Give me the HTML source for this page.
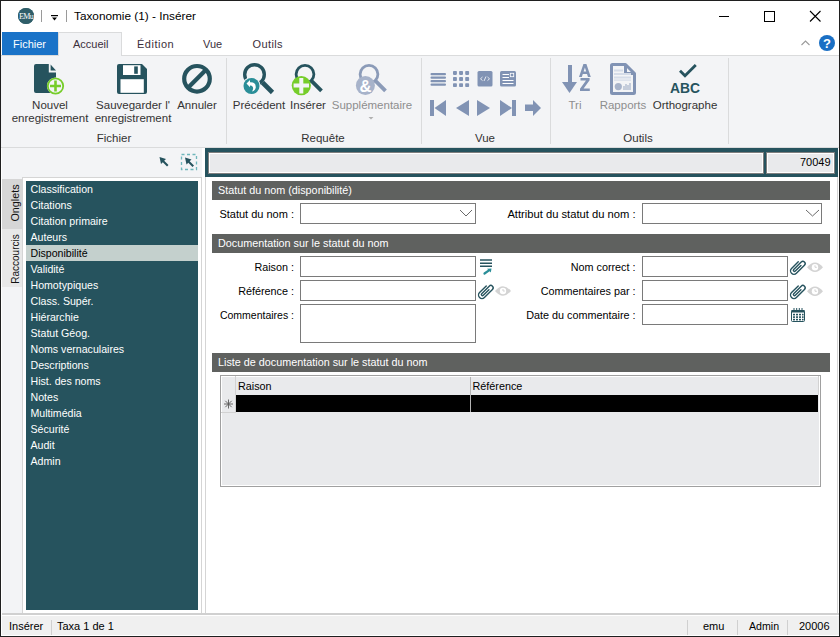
<!DOCTYPE html>
<html><head><meta charset="utf-8">
<style>
*{margin:0;padding:0;box-sizing:border-box}
html,body{width:840px;height:637px;overflow:hidden;background:#fff}
body{position:relative;font-family:"Liberation Sans",sans-serif;font-size:11px;color:#000}
.a{position:absolute}
.t{position:absolute;white-space:nowrap;line-height:1}
.rl{position:absolute;white-space:nowrap;font-size:11.5px;color:#333;line-height:1;text-align:center}
.dis{color:#8a8a8a}
.sec{position:absolute;left:212px;width:618px;height:19px;background:#5f615f;color:#fff;font-size:10.8px}
.lbl{position:absolute;white-space:nowrap;line-height:1;text-align:right;font-size:10.8px}
.box{position:absolute;border:1px solid #7a7a7a;background:#fff}
.li{position:absolute;left:26px;width:172px;height:16px;color:#fff;padding-left:4.5px;line-height:16px;font-size:10.6px}
</style></head><body>
<!-- window border -->
<div class="a" style="left:0;top:0;width:840px;height:637px;border:1px solid #1f1f1f"></div>

<div class="a" style="left:1px;top:148px;width:1px;height:488px;background:#fff;z-index:5"></div>
<!-- title bar -->
<div class="a" style="left:18px;top:8px;width:16px;height:16px;border-radius:50%;background:#2f5e69"></div>
<div class="a" style="left:41px;top:10px;width:1px;height:12px;background:#9a9a9a"></div>
<div class="a" style="left:66px;top:10px;width:1px;height:12px;background:#9a9a9a"></div>
<div class="t" style="left:74px;top:11px;font-size:11.8px">Taxonomie (1) - Insérer</div>
<div class="a" style="left:719px;top:16px;width:10px;height:1px;background:#000"></div>
<div class="a" style="left:764px;top:11px;width:11px;height:11px;border:1px solid #000"></div>


<svg class="a" style="left:0;top:0" width="840" height="32">
<circle cx="26" cy="16" r="8" fill="#2f5e69"/>
<text x="26" y="19" font-family="Liberation Serif" font-size="8" fill="#fff" text-anchor="middle" letter-spacing="-0.6">EMu</text>
<rect x="51" y="15" width="7" height="1.2" fill="#000"/>
<path d="M52 17.5 L57 17.5 L54.5 20.5 Z" fill="#000"/>
<path d="M810 11 L820.5 21.5 M820.5 11 L810 21.5" stroke="#000" stroke-width="1.1"/>
</svg>
<svg class="a" style="left:790px;top:32px" width="50" height="24">
<path d="M11.5 13 L15.5 9 L19.5 13" stroke="#9a9a9a" stroke-width="1.1" fill="none"/>
<circle cx="37" cy="11" r="8" fill="#1a6fc4"/>
<text x="37" y="15.5" font-family="Liberation Sans" font-weight="bold" font-size="13" fill="#fff" text-anchor="middle">?</text>
</svg>

<!-- tabs -->
<div class="a" style="left:2px;top:32px;width:56px;height:23px;background:#1a73c8"></div>
<div class="t" style="left:13px;top:39px;font-size:11px;color:#fff">Fichier</div>
<div class="a" style="left:1px;top:55px;width:838px;height:1px;background:#dadbdc"></div>
<div class="a" style="left:58px;top:32px;width:64px;height:24px;background:#f3f4f6;border:1px solid #dadbdc;border-bottom:none"></div>
<div class="t" style="left:73px;top:39px;font-size:11px;color:#3b2f3b">Accueil</div>
<div class="t" style="left:137px;top:39px;font-size:11px;color:#3b2f3b;letter-spacing:0.5px">Édition</div>
<div class="t" style="left:203px;top:39px;font-size:11px;color:#3b2f3b">Vue</div>
<div class="t" style="left:252.5px;top:39px;font-size:11px;color:#3b2f3b;letter-spacing:0.4px">Outils</div>

<!-- ribbon body -->
<div class="a" style="left:1px;top:56px;width:838px;height:91px;background:#f3f4f6"></div>
<div class="a" style="left:1px;top:147px;width:838px;height:1px;background:#dadbdc"></div>
<div class="a" style="left:226px;top:58px;width:1px;height:86px;background:#dadbdc"></div>
<div class="a" style="left:421px;top:58px;width:1px;height:86px;background:#dadbdc"></div>
<div class="a" style="left:550px;top:58px;width:1px;height:86px;background:#dadbdc"></div>
<div class="a" style="left:728px;top:58px;width:1px;height:86px;background:#dadbdc"></div>

<div class="rl" style="left:10px;top:99px;width:80px;line-height:13px">Nouvel<br>enregistrement</div>
<div class="rl" style="left:93px;top:99px;width:80px;line-height:13px">Sauvegarder l'<br>enregistrement</div>
<div class="rl" style="left:176px;top:99px;width:42px;line-height:13px">Annuler</div>
<div class="rl" style="left:84px;top:133px;width:60px">Fichier</div>

<div class="rl" style="left:232px;top:99px;width:54px;line-height:13px">Précédent</div>
<div class="rl" style="left:288px;top:99px;width:40px;line-height:13px">Insérer</div>
<div class="rl dis" style="left:330px;top:99px;width:84px;line-height:13px;color:#8e8e8e">Supplémentaire</div>
<div class="rl" style="left:293px;top:133px;width:60px">Requête</div>
<div class="rl" style="left:455px;top:133px;width:60px">Vue</div>
<div class="rl" style="left:560px;top:100px;width:30px;color:#8e8e8e">Tri</div>
<div class="rl" style="left:596px;top:100px;width:54px;color:#8e8e8e">Rapports</div>
<div class="rl" style="left:650px;top:100px;width:70px">Orthographe</div>
<div class="rl" style="left:608px;top:133px;width:60px">Outils</div>


<svg class="a" style="left:0;top:0" width="840" height="148">
<!-- Nouvel -->
<path d="M36 64 H48.8 V72.5 H56 V91 Q56 93 54 93 H36 Q34 93 34 91 V66 Q34 64 36 64 Z" fill="#26535e"/>
<path d="M50.6 64.6 L56 70.4 H50.6 Z" fill="#26535e"/>
<circle cx="55.5" cy="86" r="8.6" fill="#f3f4f6"/>
<circle cx="55.5" cy="86" r="7.7" fill="none" stroke="#76cd2a" stroke-width="1.8"/>
<path d="M55.5 80.5 V91.5 M50 86 H61" stroke="#76cd2a" stroke-width="2.6"/>
<!-- Save -->
<path d="M119 64 H142 L147 69 V92 Q147 94 145 94 H119 Q117 94 117 92 V66 Q117 64 119 64 Z" fill="#26535e"/>
<rect x="123" y="65.2" width="17.5" height="9.8" fill="#fff"/>
<rect x="134.2" y="66.4" width="3.6" height="7.4" fill="#26535e"/>
<rect x="120.5" y="79.2" width="23.3" height="13.6" fill="#fff"/>
<!-- Annuler -->
<circle cx="197" cy="78.8" r="12.8" fill="none" stroke="#26535e" stroke-width="4.2"/>
<path d="M206 69.8 L188 87.8" stroke="#26535e" stroke-width="4.2"/>
<!-- Precedent -->
<circle cx="254.5" cy="74.5" r="9.8" fill="none" stroke="#26535e" stroke-width="3.4"/>
<path d="M262.5 82.5 L272.5 92.5" stroke="#26535e" stroke-width="4.6"/>
<circle cx="251.5" cy="86" r="9.2" fill="#f3f4f6"/>
<circle cx="251.5" cy="86" r="8" fill="#2a8e98"/>
<path d="M246.5 83.5 L250 80 L250 82.3 Q256 82 255.8 87.5 Q255.3 90.5 252 91.5 Q254 88.5 252.5 86.5 Q251.5 85.2 250 85.5 L250 87.2 Z" fill="#fff"/>
<!-- Inserer -->
<circle cx="305" cy="74.2" r="8.9" fill="none" stroke="#26535e" stroke-width="2.8"/>
<path d="M311.5 80.8 L321.5 90.8" stroke="#26535e" stroke-width="3.8"/>
<circle cx="301.3" cy="85.6" r="9.6" fill="#76cd2a"/>
<path d="M301.3 78 V93.5 M293.6 85.6 H309" stroke="#f3f4f6" stroke-width="4"/>
<!-- Supplementaire -->
<circle cx="369" cy="74.2" r="8.9" fill="none" stroke="#8b9bb8" stroke-width="2.8"/>
<path d="M375.5 80.8 L385.5 90.8" stroke="#8b9bb8" stroke-width="3.8"/>
<circle cx="365.4" cy="85.5" r="9.5" fill="#a7b3ca"/>
<text x="365.4" y="92" font-family="Liberation Sans" font-weight="bold" font-size="16.5" fill="#fff" text-anchor="middle">&amp;</text>
<path d="M368.5 117 H373.5 L371 119.5 Z" fill="#b0b0b0"/>
<!-- Vue row1 -->
<g fill="#8193b4">
<rect x="430.5" y="73" width="15.5" height="2.2" rx="1"/>
<rect x="430.5" y="76.5" width="15.5" height="2.2" rx="1"/>
<rect x="430.5" y="80" width="15.5" height="2.2" rx="1"/>
<rect x="430.5" y="83.5" width="15.5" height="2.2" rx="1"/>
<rect x="453" y="71" width="3.9" height="3.9" rx="0.8"/><rect x="459.1" y="71" width="3.9" height="3.9" rx="0.8"/><rect x="465.2" y="71" width="3.9" height="3.9" rx="0.8"/><rect x="453" y="77.1" width="3.9" height="3.9" rx="0.8"/><rect x="459.1" y="77.1" width="3.9" height="3.9" rx="0.8"/><rect x="465.2" y="77.1" width="3.9" height="3.9" rx="0.8"/><rect x="453" y="83.2" width="3.9" height="3.9" rx="0.8"/><rect x="459.1" y="83.2" width="3.9" height="3.9" rx="0.8"/><rect x="465.2" y="83.2" width="3.9" height="3.9" rx="0.8"/>
<rect x="477.5" y="71" width="15" height="15.5" rx="1.5"/>
<rect x="500" y="71" width="16" height="15.5" rx="1.5"/>
<!-- row2 -->
<rect x="430" y="100" width="4" height="16"/>
<path d="M446 100 V116 L434.5 108 Z"/>
<path d="M469 100 V116 L456 108 Z"/>
<path d="M477 100 V116 L490 108 Z"/>
<path d="M500 100 V116 L512 108 Z"/>
<rect x="512" y="100" width="4" height="16"/>
<rect x="525" y="104.5" width="8.5" height="6.5"/>
<path d="M533 100 V116 L541 108 Z"/>
</g>
<path d="M482.5 77 L480.5 78.8 L482.5 80.6 M487.5 77 L489.5 78.8 L487.5 80.6 M486 76.5 L484 81" stroke="#fff" stroke-width="0.8" fill="none"/>
<path d="M502.5 74.5 H509 M502.5 77.5 H509 M502.5 80.5 H513.5 M502.5 83.5 H513.5" stroke="#fff" stroke-width="1"/>
<rect x="510.3" y="73.3" width="3.4" height="3.4" fill="none" stroke="#fff" stroke-width="0.8"/>
<!-- Tri -->
<g fill="#8193b4">
<rect x="568" y="65" width="4" height="18"/>
<path d="M562 82 H577 L569.5 93 Z"/>
</g>
<path fill-rule="evenodd" fill="#8193b4" d="M579 77 L583.4 64 H586.4 L590.8 77 H588 L587 74 H582.8 L581.8 77 Z M583.6 71.6 H586.2 L584.9 67.4 Z"/><path fill="#8193b4" d="M580.5 78 H589.6 V80.3 L583.6 88.6 H589.8 V91 H580 V88.7 L586 80.4 H580.5 Z"/>
<!-- Rapports -->
<path d="M612.5 64.5 H625.5 L634.5 73.5 V92.5 Q634.5 93.5 633.5 93.5 H612.5 Q611.5 93.5 611.5 92.5 V65.5 Q611.5 64.5 612.5 64.5 Z M625.5 64.5 V73.5 H634.5" fill="none" stroke="#8193b4" stroke-width="3" stroke-linejoin="round"/>
<g fill="#d5dce8">
<rect x="614" y="69.5" width="9" height="2"/>
<rect x="614" y="73" width="17" height="2"/>
<rect x="614" y="76.5" width="17" height="2"/>
<rect x="614" y="79.5" width="17" height="1.2"/>
</g>
<circle cx="618.3" cy="86.6" r="3.6" fill="#a7b3ca"/>
<path d="M624 90 V86 M626 90 V84 M628 90 V85 M630 90 V83" stroke="#a7b3ca" stroke-width="1.2"/>
<!-- Orthographe -->
<path d="M680 70.8 L685 75.8 L695.8 65" stroke="#26535e" stroke-width="2.8" fill="none"/>
<text x="685" y="93" font-family="Liberation Sans" font-weight="bold" font-size="15.5" fill="#26535e" text-anchor="middle" textLength="30" lengthAdjust="spacingAndGlyphs">ABC</text>
<!-- left toolbar pointers -->
<path d="M159.5 157 L166 159 L164.2 160.8 L168.5 165 L167 166.5 L162.8 162.2 L161 164 Z" fill="#26535e"/>
</svg>

<!-- main area -->
<div class="a" style="left:1px;top:148px;width:201px;height:465px;background:#f3f4f6"></div>
<div class="a" style="left:202px;top:148px;width:3px;height:465px;background:#fff"></div>
<div class="a" style="left:205px;top:148px;width:633px;height:465px;background:#fff;border-left:1px solid #d5d5d5;border-right:1px solid #d5d5d5"></div>

<!-- record bar -->
<div class="a" style="left:205px;top:148px;width:633px;height:29px;background:#26535e"></div>
<div class="a" style="left:209px;top:153px;width:554px;height:20px;background:#e9eaec;border:1px solid #fff;outline:1px solid #7f7f7f"></div>
<div class="a" style="left:767px;top:153px;width:67px;height:20px;background:#e9eaec;border:1px solid #fff;outline:1px solid #7f7f7f"></div>
<div class="t" style="left:800px;top:157px;font-size:11px">70049</div>

<!-- left pane list -->
<div class="a" style="left:22px;top:177px;width:180px;height:436px;background:#fff;border:1px solid #d5d5d5;border-bottom:none"></div>
<div class="a" style="left:26px;top:181px;width:172px;height:429px;background:#26535e"></div>
<div class="a" style="left:2px;top:179px;width:20px;height:50px;background:#d6d6d6"></div>
<div class="a" style="left:2px;top:229px;width:20px;height:58px;background:#e8e8e8"></div>


<div class="t" style="left:-4.5px;top:197px;width:40px;height:12px;text-align:center;font-size:10.8px;transform:rotate(-90deg);color:#111">Onglets</div>
<div class="t" style="left:-9.5px;top:253px;width:52px;height:12px;text-align:center;font-size:10px;transform:rotate(-90deg);color:#111">Raccourcis</div>
<svg class="a" style="left:150px;top:150px" width="52" height="26">
<path d="M9.5 7 L16 9 L14.2 10.8 L18.5 15 L17 16.5 L12.8 12.2 L11 14 Z" fill="#26535e"/>
<path d="M35 7.5 L41.5 9.5 L39.7 11.3 L44 15.5 L42.5 17 L38.3 12.7 L36.5 14.5 Z" fill="#26535e"/>
<rect x="31.5" y="4.5" width="15" height="15" fill="none" stroke="#6fb6bb" stroke-width="1.3" stroke-dasharray="3 2.5"/>
</svg>

<div class="li" style="top:181px">Classification</div>
<div class="li" style="top:197px">Citations</div>
<div class="li" style="top:213px">Citation primaire</div>
<div class="li" style="top:229px">Auteurs</div>
<div class="li" style="top:245px;background:#c4d0cd;color:#000">Disponibilité</div>
<div class="li" style="top:261px">Validité</div>
<div class="li" style="top:277px">Homotypiques</div>
<div class="li" style="top:293px">Class. Supér.</div>
<div class="li" style="top:309px">Hiérarchie</div>
<div class="li" style="top:325px">Statut Géog.</div>
<div class="li" style="top:341px">Noms vernaculaires</div>
<div class="li" style="top:357px">Descriptions</div>
<div class="li" style="top:373px">Hist. des noms</div>
<div class="li" style="top:389px">Notes</div>
<div class="li" style="top:405px">Multimédia</div>
<div class="li" style="top:421px">Sécurité</div>
<div class="li" style="top:437px">Audit</div>
<div class="li" style="top:453px">Admin</div>

<!-- form -->
<div class="sec" style="top:181px"><div class="t" style="left:6px;top:4px;color:#fff">Statut du nom (disponibilité)</div></div>
<div class="lbl" style="left:194px;width:100px;top:209px;font-size:11px">Statut du nom :</div>
<div class="box" style="left:300px;top:203px;width:176px;height:21px"></div>
<div class="lbl" style="left:486px;width:149.5px;top:209px;font-size:11.2px">Attribut du statut du nom :</div>
<div class="box" style="left:642px;top:203px;width:180px;height:21px"></div>

<div class="sec" style="top:234px"><div class="t" style="left:6px;top:4px;color:#fff">Documentation sur le statut du nom</div></div>
<div class="lbl" style="left:194px;width:100px;top:262px">Raison :</div>
<div class="box" style="left:300px;top:256px;width:176px;height:21px"></div>
<div class="lbl" style="left:194px;width:100px;top:286px">Référence :</div>
<div class="box" style="left:300px;top:280px;width:176px;height:21px"></div>
<div class="lbl" style="left:194px;width:100px;top:310px;font-size:10.5px">Commentaires :</div>
<div class="box" style="left:300px;top:304px;width:176px;height:39px"></div>

<div class="lbl" style="left:486px;width:149.5px;top:262px">Nom correct :</div>
<div class="box" style="left:642px;top:256px;width:146px;height:21px"></div>
<div class="lbl" style="left:486px;width:149.5px;top:286px">Commentaires par :</div>
<div class="box" style="left:642px;top:280px;width:146px;height:21px"></div>
<div class="lbl" style="left:486px;width:149.5px;top:310px">Date du commentaire :</div>
<div class="box" style="left:642px;top:304px;width:146px;height:21px"></div>

<div class="sec" style="top:353px"><div class="t" style="left:6px;top:4px;color:#fff">Liste de documentation sur le statut du nom</div></div>
<div class="a" style="left:220px;top:375px;width:601px;height:112px;background:#e9eaec;border:1px solid #a0a0a0;box-shadow:inset 0 0 0 1px #fff"></div>
<div class="a" style="left:235px;top:376px;width:1px;height:36px;background:#d2d2d2"></div>
<div class="a" style="left:221px;top:412px;width:15px;height:1px;background:#d2d2d2"></div>
<div class="a" style="left:818px;top:376px;width:1px;height:19px;background:#d2d2d2"></div>
<div class="a" style="left:236px;top:395px;width:582px;height:17px;background:#000"></div>
<div class="a" style="left:470px;top:377px;width:1px;height:35px;background:#b4b4b4"></div>
<svg class="a" style="left:221px;top:396px" width="15" height="16"><path d="M7.5 3.5 V12.5 M3 8 H12 M4.3 4.8 L10.7 11.2 M10.7 4.8 L4.3 11.2" stroke="#5a5a5a" stroke-width="0.9"/></svg>
<div class="t" style="left:238px;top:381px;font-size:10.8px">Raison</div>
<div class="t" style="left:472.5px;top:381px;font-size:10.8px">Référence</div>


<svg class="a" style="left:0;top:0" width="840" height="637">
<path d="M460 210 L466 216 L472 210" fill="none" stroke="#6a6a6a" stroke-width="1"/>
<path d="M806 210 L812.5 216 L819 210" fill="none" stroke="#6a6a6a" stroke-width="1"/>
<path d="M480 260 H492 M480 263.2 H492 M480 266.3 H492" stroke="#26535e" stroke-width="1.4"/>
<path d="M484.5 273.5 L489 270.3" stroke="#2a8e98" stroke-width="2.2" stroke-linecap="round"/>
<path d="M487 268.8 L491.5 268.5 L490.8 272.5 Z" fill="#2a8e98"/>
<g transform="translate(486 291) rotate(45) scale(0.76) translate(-4.5 -12)"><path d="M6 8 V18.5 A1.5 1.5 0 0 1 3 18.5 V4.5 A3 3 0 0 1 9 4.5 V19.5 A4.5 4.5 0 0 1 0 19.5 V7" fill="none" stroke="#26535e" stroke-width="1.85" stroke-linecap="round"/></g>
<path d="M495 291 Q503 281.5 511 291 Q503 300.5 495 291 Z" fill="#d3d3d3"/><circle cx="503" cy="291" r="3.2" fill="#fff"/><path d="M503 289 V291 H504.8" stroke="#d3d3d3" stroke-width="1" fill="none"/>
<g transform="translate(798 266.8) rotate(45) scale(0.76) translate(-4.5 -12)"><path d="M6 8 V18.5 A1.5 1.5 0 0 1 3 18.5 V4.5 A3 3 0 0 1 9 4.5 V19.5 A4.5 4.5 0 0 1 0 19.5 V7" fill="none" stroke="#26535e" stroke-width="1.85" stroke-linecap="round"/></g>
<path d="M807 267.3 Q815 257.8 823 267.3 Q815 276.8 807 267.3 Z" fill="#d3d3d3"/><circle cx="815" cy="267.3" r="3.2" fill="#fff"/><path d="M815 265.3 V267.3 H816.8" stroke="#d3d3d3" stroke-width="1" fill="none"/>
<g transform="translate(798 291) rotate(45) scale(0.76) translate(-4.5 -12)"><path d="M6 8 V18.5 A1.5 1.5 0 0 1 3 18.5 V4.5 A3 3 0 0 1 9 4.5 V19.5 A4.5 4.5 0 0 1 0 19.5 V7" fill="none" stroke="#26535e" stroke-width="1.85" stroke-linecap="round"/></g>
<path d="M807 291.3 Q815 281.8 823 291.3 Q815 300.8 807 291.3 Z" fill="#d3d3d3"/><circle cx="815" cy="291.3" r="3.2" fill="#fff"/><path d="M815 289.3 V291.3 H816.8" stroke="#d3d3d3" stroke-width="1" fill="none"/>
<g fill="none" stroke="#26535e" stroke-width="1">
<rect x="791.5" y="310.5" width="13" height="11" rx="1"/>
</g>
<rect x="791.5" y="310" width="13" height="2.5" fill="#26535e"/>
<path d="M794 308 V311.5 M796.7 308 V311.5 M799.3 308 V311.5 M802 308 V311.5" stroke="#26535e" stroke-width="1"/>
<g fill="#26535e">
<rect x="793" y="313.8" width="2" height="1.6"/><rect x="796" y="313.8" width="2" height="1.6"/><rect x="799" y="313.8" width="2" height="1.6"/><rect x="802" y="313.8" width="1.6" height="1.6"/>
<rect x="793" y="316.3" width="2" height="1.6"/><rect x="796" y="316.3" width="2" height="1.6"/><rect x="799" y="316.3" width="2" height="1.6"/><rect x="802" y="316.3" width="1.6" height="1.6"/>
<rect x="793" y="318.8" width="2" height="1.6"/><rect x="796" y="318.8" width="2" height="1.6"/><rect x="799" y="318.8" width="2" height="1.6"/><rect x="802" y="318.8" width="1.6" height="1.6"/>
</g>
</svg>

<!-- status bar -->
<div class="a" style="left:1px;top:613px;width:838px;height:2px;background:#d0d0d0"></div>
<div class="a" style="left:1px;top:616px;width:838px;height:19px;background:#f0f0f0"></div>
<div class="t" style="left:9px;top:621px">Insérer</div>
<div class="a" style="left:51px;top:620px;width:1px;height:15px;background:#d0d0d0"></div>
<div class="t" style="left:57px;top:621px">Taxa 1 de 1</div>
<div class="a" style="left:687px;top:620px;width:1px;height:15px;background:#d0d0d0"></div>
<div class="a" style="left:737px;top:620px;width:1px;height:15px;background:#d0d0d0"></div>
<div class="a" style="left:787px;top:620px;width:1px;height:15px;background:#d0d0d0"></div>
<div class="t" style="left:703px;top:621px">emu</div>
<div class="t" style="left:749px;top:621px;font-size:10.6px">Admin</div>
<div class="t" style="left:799px;top:621px">20006</div>
</body></html>
